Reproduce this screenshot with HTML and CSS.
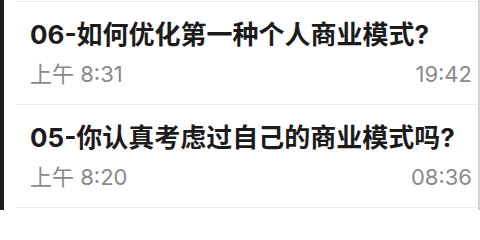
FILE: index.html
```html
<!DOCTYPE html>
<html lang="zh-CN">
<head>
<meta charset="utf-8">
<title>列表</title>
<link rel="stylesheet" href="styles.css">
</head>
<body>
<div class="frame">
  <div class="strip"></div>
  <div class="list">
    <div class="row">
      <div class="title">06-如何优化第一种个人商业模式?</div>
      <div class="meta">
        <span class="date">上午 8:31</span>
        <span class="dur">19:42</span>
      </div>
    </div>
    <div class="row">
      <div class="title">05-你认真考虑过自己的商业模式吗?</div>
      <div class="meta">
        <span class="date">上午 8:20</span>
        <span class="dur">08:36</span>
      </div>
    </div>
  </div>
  <div class="edge"></div>
</div>
</body>
</html>
```

FILE: styles.css
```css
html, body {
  margin: 0;
  padding: 0;
  background: #ffffff;
}
body {
  width: 480px;
  height: 210px;
  overflow: hidden;
  font-family: Inter, "Noto Sans CJK SC", sans-serif;
}
.frame {
  display: flex;
  height: 210px;
}
.strip {
  width: 4px;
  background: #1d1c22;
  flex: none;
}
.list {
  flex: 1;
  padding-top: 1px;
  padding-left: 12px;
}
.list::before {
  content: "";
  display: block;
  height: 1px;
  background: #efefef;
}
.row {
  height: 103px;
  box-sizing: border-box;
  border-bottom: 1px solid #ececec;
  padding: 17px 6px 0 14px;
}
.title {
  font-size: 26px;
  line-height: 32px;
  font-weight: 700;
  color: #1b1b1b;
  white-space: nowrap;
}
.meta {
  display: flex;
  justify-content: space-between;
  margin-top: 9px;
  font-size: 22px;
  line-height: 28px;
  color: #8a8a8a;
}
.edge {
  width: 2px;
  background: #d4d4d4;
  flex: none;
}
```
